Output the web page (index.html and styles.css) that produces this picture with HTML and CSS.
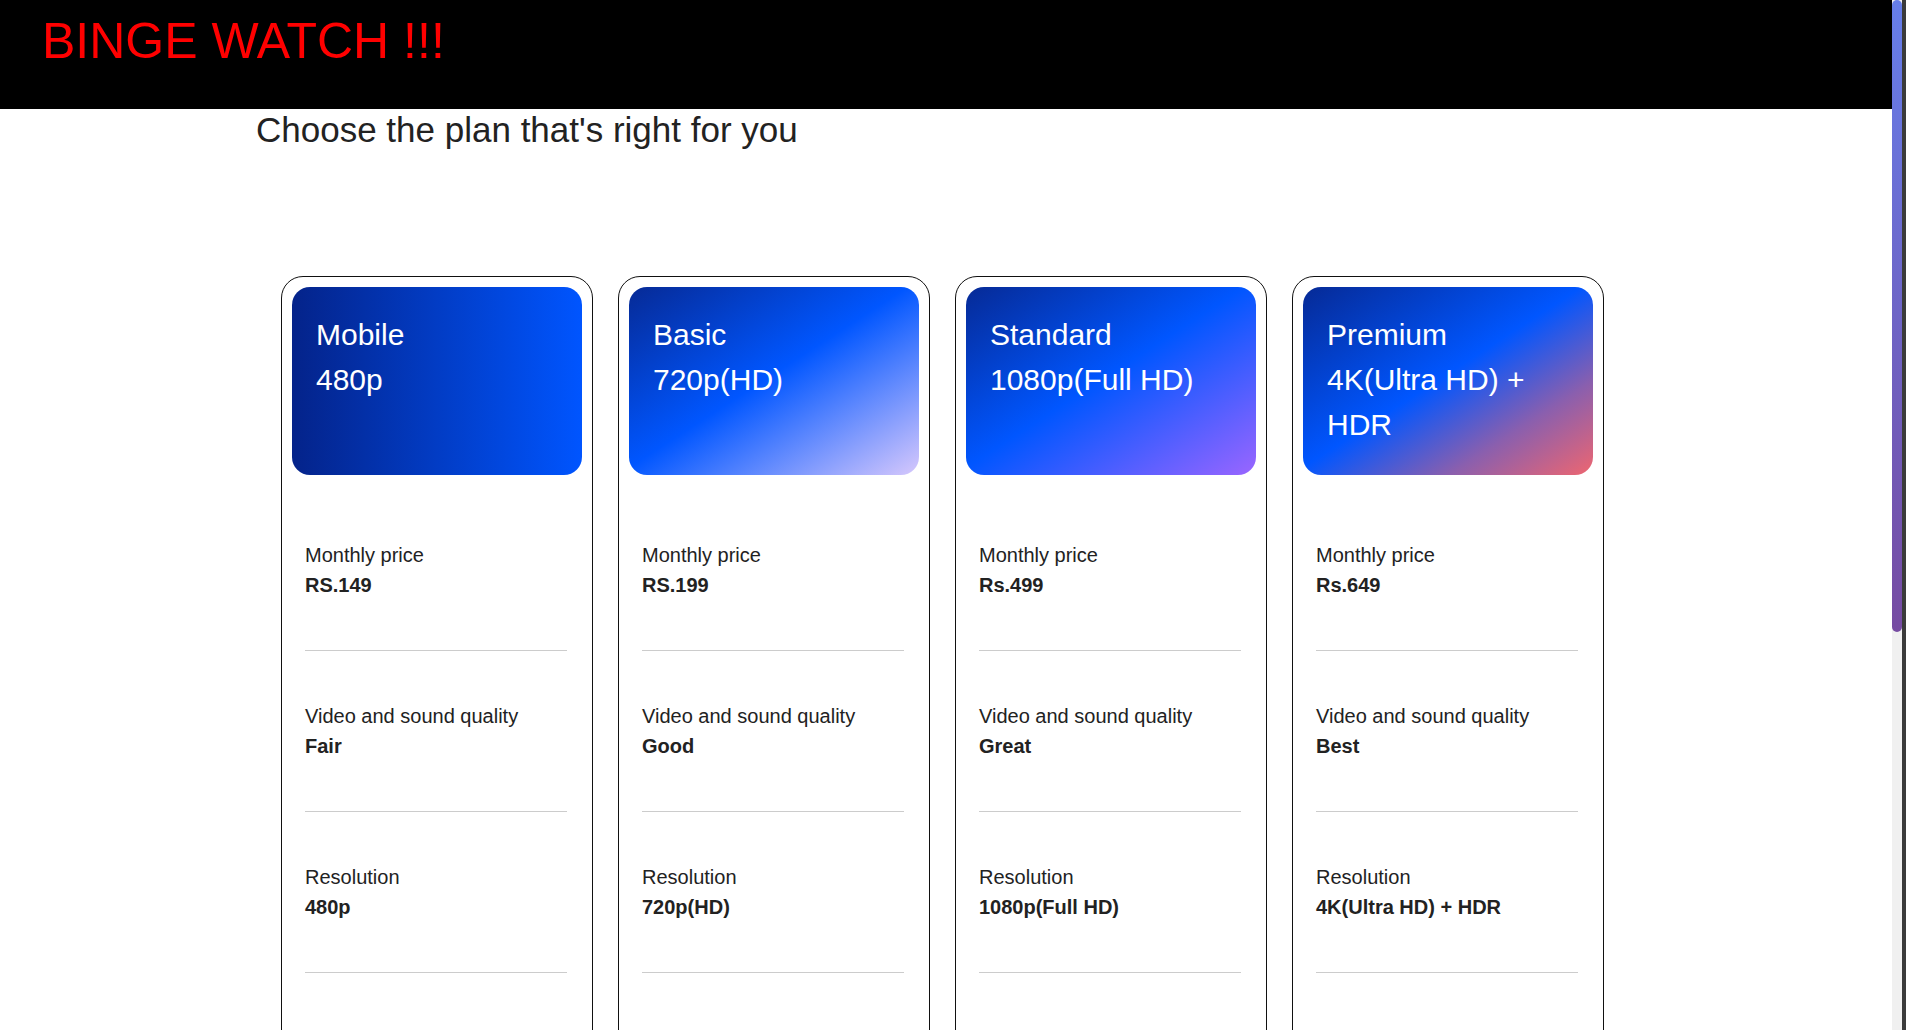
FILE: index.html
```html
<!DOCTYPE html>
<html lang="en">
<head>
  <meta charset="UTF-8">
  <meta name="viewport" content="width=device-width, initial-scale=1.0">
  <title>Binge Watch - Plans</title>
  <link rel="stylesheet" href="styles.css">
</head>
<body>
  <header class="topbar">
    <h1 class="brand">BINGE WATCH !!!</h1>
  </header>

  <main class="page">
    <h2 class="page-title">Choose the plan that's right for you</h2>

    <div class="plans">
      <!-- Mobile -->
      <div class="plan">
        <div class="plan-head mobile">
          <p>Mobile</p>
          <p>480p</p>
        </div>
        <ul class="plan-info">
          <li><span class="label">Monthly price</span><span class="value">RS.149</span></li>
          <li><span class="label">Video and sound quality</span><span class="value">Fair</span></li>
          <li><span class="label">Resolution</span><span class="value">480p</span></li>
          <li><span class="label">Supported devices</span><span class="value">Mobile phone, tablet</span></li>
          <li><span class="label">Devices your household can watch at the same time</span><span class="value">1</span></li>
          <li><span class="label">Download devices</span><span class="value">1</span></li>
        </ul>
      </div>

      <!-- Basic -->
      <div class="plan">
        <div class="plan-head basic">
          <p>Basic</p>
          <p>720p(HD)</p>
        </div>
        <ul class="plan-info">
          <li><span class="label">Monthly price</span><span class="value">RS.199</span></li>
          <li><span class="label">Video and sound quality</span><span class="value">Good</span></li>
          <li><span class="label">Resolution</span><span class="value">720p(HD)</span></li>
          <li><span class="label">Supported devices</span><span class="value">TV, computer, mobile phone, tablet</span></li>
          <li><span class="label">Devices your household can watch at the same time</span><span class="value">1</span></li>
          <li><span class="label">Download devices</span><span class="value">1</span></li>
        </ul>
      </div>

      <!-- Standard -->
      <div class="plan">
        <div class="plan-head standard">
          <p>Standard</p>
          <p>1080p(Full HD)</p>
        </div>
        <ul class="plan-info">
          <li><span class="label">Monthly price</span><span class="value">Rs.499</span></li>
          <li><span class="label">Video and sound quality</span><span class="value">Great</span></li>
          <li><span class="label">Resolution</span><span class="value">1080p(Full HD)</span></li>
          <li><span class="label">Supported devices</span><span class="value">TV, computer, mobile phone, tablet</span></li>
          <li><span class="label">Devices your household can watch at the same time</span><span class="value">2</span></li>
          <li><span class="label">Download devices</span><span class="value">2</span></li>
        </ul>
      </div>

      <!-- Premium -->
      <div class="plan">
        <div class="plan-head premium">
          <p>Premium</p>
          <p>4K(Ultra HD) + HDR</p>
        </div>
        <ul class="plan-info">
          <li><span class="label">Monthly price</span><span class="value">Rs.649</span></li>
          <li><span class="label">Video and sound quality</span><span class="value">Best</span></li>
          <li><span class="label">Resolution</span><span class="value">4K(Ultra HD) + HDR</span></li>
          <li><span class="label">Supported devices</span><span class="value">TV, computer, mobile phone, tablet</span></li>
          <li><span class="label">Devices your household can watch at the same time</span><span class="value">4</span></li>
          <li><span class="label">Download devices</span><span class="value">6</span></li>
        </ul>
      </div>
    </div>
  </main>

  <!-- styled scroll rail (sits over the right edge) -->
  <div class="scroll-rail" aria-hidden="true">
    <div class="scroll-thumb"></div>
  </div>
</body>
</html>
```

FILE: styles.css
```css
/* Page basics */
body {
  margin: 0;
  font-family: 'Liberation Sans', Arial, sans-serif;
  color: #222;
  background: #fff;
}

/* Custom scrollbar look */
.scroll-rail {
  position: fixed;
  top: 0;
  right: 0;
  width: 14px;
  height: 100vh;
  box-sizing: border-box;
  background: #f0f0f0;
  border-right: 4px solid #3b3b3b;
}

.scroll-thumb {
  height: 632px;
  border-radius: 5px;
  background: linear-gradient(#667eea, #764ba2);
}

/* Header */
.topbar {
  background: #000;
  height: 109px;
  box-sizing: border-box;
  padding: 12px 0 0 42px;
}

.brand {
  margin: 0;
  color: #ff0000;
  font-size: 50px;
  font-weight: normal;
}

/* Plans */
.page {
  padding-bottom: 150px;
}

.page-title {
  margin: 1px 0 0 256px;
  font-size: 35px;
  font-weight: normal;
  color: #222;
}

.plans {
  display: flex;
  align-items: stretch;
  gap: 25px;
  margin: 126px 0 0 281px;
}

.plan {
  width: 312px;
  box-sizing: border-box;
  padding: 10px;
  border: 1px solid #111;
  border-radius: 22px;
}

.plan-head {
  height: 188px;
  box-sizing: border-box;
  padding: 25px 25px 25px 24px;
  border-radius: 18px;
  color: #fff;
  font-size: 30px;
  line-height: 45px;
}

.plan-head p {
  margin: 0;
}

.plan-head.mobile {
  background: linear-gradient(to right, #04238a, #0055ff);
}

.plan-head.basic {
  background: linear-gradient(to bottom right, #062a96 0%, #0056ff 48%, #d6c8fc 100%);
}

.plan-head.standard {
  background: linear-gradient(to bottom right, #062a96 0%, #0056ff 48%, #9a66ff 100%);
}

.plan-head.premium {
  background: linear-gradient(to bottom right, #062a96 0%, #0056ff 48%, #8a5fae 75%, #ee6670 100%);
}

.plan-info {
  list-style: none;
  margin: 0;
  padding: 15px 15px 0 13px;
}

.plan-info li {
  padding: 50px 0;
  border-bottom: 1px solid #cccccc;
  font-size: 20px;
  line-height: 30px;
}

.plan-info .label,
.plan-info .value {
  display: block;
}

.plan-info .value {
  font-weight: bold;
}
```
